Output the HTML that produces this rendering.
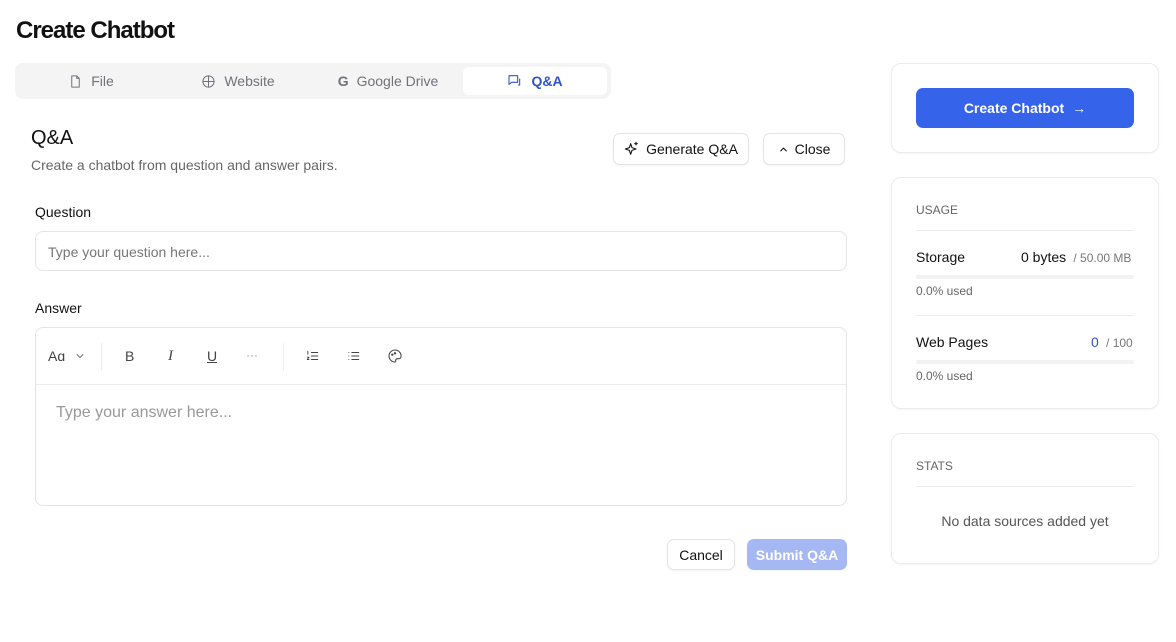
<!DOCTYPE html>
<html><head><style>
*{box-sizing:border-box;margin:0;padding:0}
body{width:1176px;height:642px;background:#fff;font-family:"Liberation Sans",sans-serif;color:#111;position:relative;overflow:hidden}
.a{position:absolute}
.btn{position:absolute;border:1px solid #e4e4e7;border-radius:7px;background:#fff;font-size:14px;display:flex;align-items:center;justify-content:center;gap:6px;box-shadow:0 1px 2px rgba(0,0,0,.05)}
.card{position:absolute;left:891px;width:268px;border:1px solid #ebebed;border-radius:10px;box-shadow:0 1px 2px rgba(0,0,0,.04)}
.tab{position:absolute;top:67px;height:28px;display:flex;align-items:center;justify-content:center;gap:8px;font-size:14px;color:#71717a}
.ic{fill:none;stroke:currentColor;stroke-width:1.6;stroke-linecap:round;stroke-linejoin:round}
.tb{position:absolute;top:348px;color:#444}
</style></head><body>
<div class="a" style="left:16px;top:17px;font-size:24px;font-weight:bold;letter-spacing:-1px">Create Chatbot</div>
<div class="a" style="left:15px;top:63px;width:596px;height:36px;background:#f4f4f5;border-radius:8px"></div>
<div class="tab" style="left:19px;width:144px"><svg width="15" height="15" viewBox="0 0 24 24" class="ic"><path d="M14 3H6v18h12V7z M14 3v4h4"/></svg>File</div>
<div class="tab" style="left:163px;width:150px"><svg width="15" height="15" viewBox="0 0 24 24" class="ic"><circle cx="12" cy="12" r="9"/><path d="M3 12h18M12 3v18"/></svg>Website</div>
<div class="tab" style="left:313px;width:150px"><b style="font-size:14px;color:#71717a">G</b>Google Drive</div>
<div class="tab" style="left:463px;width:144px;background:#fff;border-radius:6px;color:#2f54c8;font-weight:bold"><svg width="16" height="16" viewBox="0 0 24 24" class="ic"><path d="M3 4h13v10H7l-4 3z M19 9v9h-2"/></svg>Q&amp;A</div>
<div class="a" style="left:31px;top:127px;font-size:20px">Q&amp;A</div>
<div class="a" style="left:31px;top:157px;font-size:14px;color:#666">Create a chatbot from question and answer pairs.</div>
<div class="btn" style="left:613px;top:133px;width:136px;height:32px"><svg width="16" height="16" viewBox="0 0 24 24" class="ic"><path d="M10 4l2 6 6 2-6 2-2 6-2-6-6-2 6-2z M18 2v4M16 4h4"/></svg>Generate Q&amp;A</div>
<div class="btn" style="left:763px;top:133px;width:82px;height:32px"><svg width="11" height="11" viewBox="0 0 24 24" class="ic" style="stroke-width:2.5"><path d="M6 15l6-6 6 6"/></svg>Close</div>
<div class="a" style="left:35px;top:204px;font-size:14px">Question</div>
<div class="a" style="left:35px;top:231px;width:812px;height:40px;border:1px solid #e4e4e7;border-radius:8px;padding:12px;font-size:14px;color:#777">Type your question here...</div>
<div class="a" style="left:35px;top:300px;font-size:14px">Answer</div>
<div class="a" style="left:35px;top:327px;width:812px;height:179px;border:1px solid #e4e4e7;border-radius:8px"></div>
<div class="a" style="left:36px;top:384px;width:810px;border-top:1px solid #ececee"></div>
<div class="a" style="left:56px;top:404px;font-size:16px;color:#999">Type your answer here...</div>
<div class="tb" style="left:48px;font-size:14px">Aɑ</div>
<svg class="a ic" style="left:74px;top:350px;color:#444" width="12" height="12" viewBox="0 0 24 24"><path d="M6 9l6 6 6-6"/></svg>
<div class="a" style="left:101px;top:343px;height:28px;border-left:1px solid #eee"></div>
<div class="tb" style="left:125px;font-size:14px">B</div>
<div class="tb" style="left:168px;font-size:15px;font-style:italic;font-family:'Liberation Serif',serif">I</div>
<div class="tb" style="left:207px;font-size:14px;text-decoration:underline">U</div>
<div class="tb" style="left:246px;font-size:12px;color:#999">···</div>
<div class="a" style="left:283px;top:343px;height:28px;border-left:1px solid #eee"></div>
<svg class="a ic" style="left:305px;top:349px;color:#444" width="15" height="14" viewBox="0 0 24 24"><path d="M10 6h11M10 12h11M10 18h11M4 4v5M3 14h3l-3 4h3"/></svg>
<svg class="a ic" style="left:346px;top:349px;color:#444" width="15" height="14" viewBox="0 0 24 24"><path d="M9 6h12M9 12h12M9 18h12M4 6h.1M4 12h.1M4 18h.1"/></svg>
<svg class="a ic" style="left:387px;top:348px;color:#444" width="16" height="16" viewBox="0 0 24 24"><path d="M12 3a9 9 0 1 0 0 18c1 0 1-1 1-2s0-3 3-3h2a3 3 0 0 0 3-3 9 9 0 0 0-9-10z"/><circle cx="8" cy="10" r="1"/><circle cx="12" cy="8" r="1"/></svg>
<div class="btn" style="left:667px;top:539px;width:68px;height:31px">Cancel</div>
<div class="btn" style="left:747px;top:539px;width:100px;height:31px;background:#a5b8f3;border-color:#a5b8f3;color:#fff;font-weight:bold">Submit Q&amp;A</div>
<div class="card" style="top:63px;height:90px"></div>
<div class="a" style="left:916px;top:88px;width:218px;height:40px;background:#3563e9;border-radius:7px;color:#fff;font-size:14px;font-weight:bold;display:flex;align-items:center;justify-content:center;gap:8px">Create Chatbot <span style="font-weight:normal">→</span></div>
<div class="card" style="top:177px;height:232px"></div>
<div class="a" style="left:916px;top:203px;font-size:12px;color:#666">USAGE</div>
<div class="a" style="left:916px;top:230px;width:218px;border-top:1px solid #ececee"></div>
<div class="a" style="left:916px;top:249px;font-size:14px">Storage</div>
<div class="a" style="left:1021px;top:249px;font-size:14px">0 bytes <span style="font-size:12px;color:#777">&nbsp;/ 50.00 MB</span></div>
<div class="a" style="left:916px;top:275px;width:218px;height:4px;background:#f2f2f3;border-radius:2px"></div>
<div class="a" style="left:916px;top:284px;font-size:12px;color:#666">0.0% used</div>
<div class="a" style="left:916px;top:315px;width:218px;border-top:1px solid #ececee"></div>
<div class="a" style="left:916px;top:334px;font-size:14px">Web Pages</div>
<div class="a" style="left:1091px;top:334px;font-size:14px;color:#2f54c8">0 <span style="font-size:12px;color:#777">&nbsp;/ 100</span></div>
<div class="a" style="left:916px;top:360px;width:218px;height:4px;background:#f2f2f3;border-radius:2px"></div>
<div class="a" style="left:916px;top:369px;font-size:12px;color:#666">0.0% used</div>
<div class="card" style="top:433px;height:131px"></div>
<div class="a" style="left:916px;top:459px;font-size:12px;color:#666">STATS</div>
<div class="a" style="left:916px;top:486px;width:218px;border-top:1px solid #ececee"></div>
<div class="a" style="left:916px;top:513px;width:218px;text-align:center;font-size:14px;color:#555">No data sources added yet</div>
</body></html>
